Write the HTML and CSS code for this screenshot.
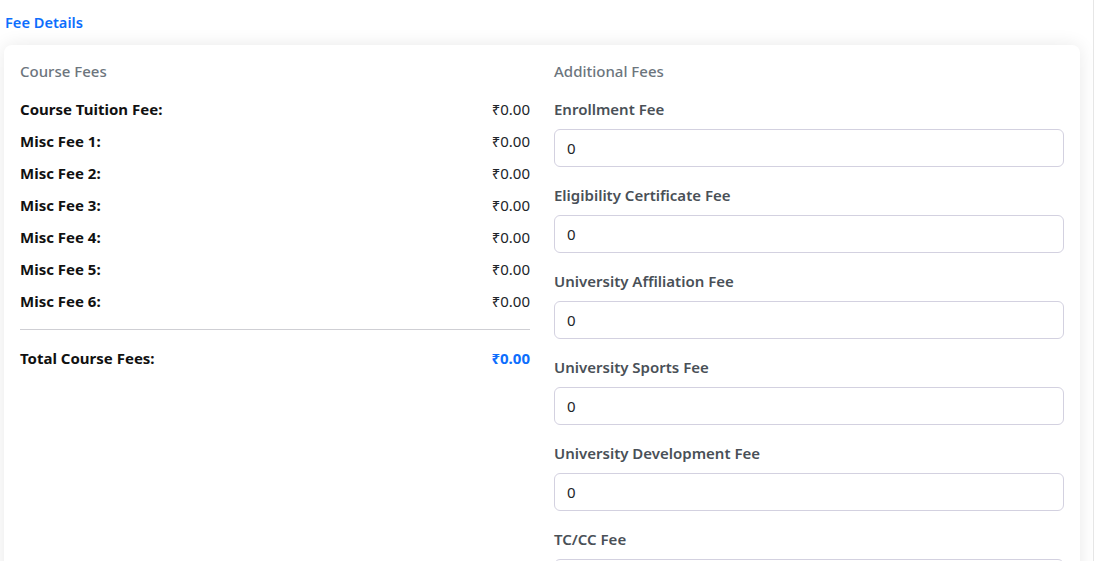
FILE: index.html
```html
<!DOCTYPE html>
<html lang="en">
<head>
<meta charset="utf-8">
<title>Fee Details</title>
<link rel="stylesheet" href="styles.css">
</head>
<body>
<div class="page">
  <h2 class="page-title">Fee Details</h2>
  <div class="card">
    <section class="col">
      <h3 class="section-title">Course Fees</h3>
      <div class="fee-row"><span class="fee-label">Course Tuition Fee:</span><span class="fee-value">₹0.00</span></div>
      <div class="fee-row"><span class="fee-label">Misc Fee 1:</span><span class="fee-value">₹0.00</span></div>
      <div class="fee-row"><span class="fee-label">Misc Fee 2:</span><span class="fee-value">₹0.00</span></div>
      <div class="fee-row"><span class="fee-label">Misc Fee 3:</span><span class="fee-value">₹0.00</span></div>
      <div class="fee-row"><span class="fee-label">Misc Fee 4:</span><span class="fee-value">₹0.00</span></div>
      <div class="fee-row"><span class="fee-label">Misc Fee 5:</span><span class="fee-value">₹0.00</span></div>
      <div class="fee-row"><span class="fee-label">Misc Fee 6:</span><span class="fee-value">₹0.00</span></div>
      <hr class="divider">
      <div class="fee-row total"><span class="fee-label">Total Course Fees:</span><span class="fee-value total-value">₹0.00</span></div>
    </section>
    <section class="col">
      <h3 class="section-title">Additional Fees</h3>
      <div class="field"><label class="field-label">Enrollment Fee</label><input class="field-input" type="text" value="0"></div>
      <div class="field"><label class="field-label">Eligibility Certificate Fee</label><input class="field-input" type="text" value="0"></div>
      <div class="field"><label class="field-label">University Affiliation Fee</label><input class="field-input" type="text" value="0"></div>
      <div class="field"><label class="field-label">University Sports Fee</label><input class="field-input" type="text" value="0"></div>
      <div class="field"><label class="field-label">University Development Fee</label><input class="field-input" type="text" value="0"></div>
      <div class="field"><label class="field-label">TC/CC Fee</label><input class="field-input" type="text" value="0"></div>
    </section>
  </div>
</div>
</body>
</html>
```
FILE: styles.css
```css
* { box-sizing: border-box; }
html, body {
  margin: 0;
  padding: 0;
  background: #ffffff;
  font-family: "Noto Sans", "Open Sans", "DejaVu Sans", sans-serif;
  color: #212529;
  overflow: hidden;
}
.page {
  width: 1094px;
  height: 561px;
  border-right: 1px solid #e6e6e6;
  padding: 11px 13px 0 4px;
  overflow: hidden;
}
.page-title {
  margin: 0 0 12px 1px;
  font-size: 14.6px;
  line-height: 22px;
  font-weight: 600;
  color: #0d6efd;
}
.card {
  background: #fff;
  border-radius: 8px;
  box-shadow: 0 0 18px rgba(0, 0, 0, 0.09);
  padding: 15px 16px 16px;
  display: grid;
  grid-template-columns: 1fr 1fr;
  column-gap: 24px;
  min-height: 600px;
}
.section-title {
  margin: 0 0 15px;
  font-size: 15px;
  line-height: 22.5px;
  font-weight: 500;
  color: #6c757d;
}
.fee-row {
  display: flex;
  justify-content: space-between;
  font-size: 15px;
  line-height: 22.5px;
  margin-bottom: 9.5px;
}
.fee-label { font-weight: 700; color: #111; }
.fee-value { color: #212529; }
.total-value { color: #0d6efd; font-weight: 700; }
.divider {
  border: 0;
  border-top: 1px solid #cfcfd4;
  margin: 16.75px 0 16.75px;
}
.field { margin-bottom: 17px; }
.field-label {
  display: block;
  font-size: 15px;
  line-height: 22.5px;
  font-weight: 600;
  color: #495057;
  margin-bottom: 8.5px;
}
.field-input {
  display: block;
  width: 100%;
  height: 38px;
  border: 1px solid #d3d1e0;
  border-radius: 6px;
  padding: 0 12px;
  font-family: inherit;
  font-size: 15px;
  color: #212529;
  background: #fff;
  outline: none;
}
```
